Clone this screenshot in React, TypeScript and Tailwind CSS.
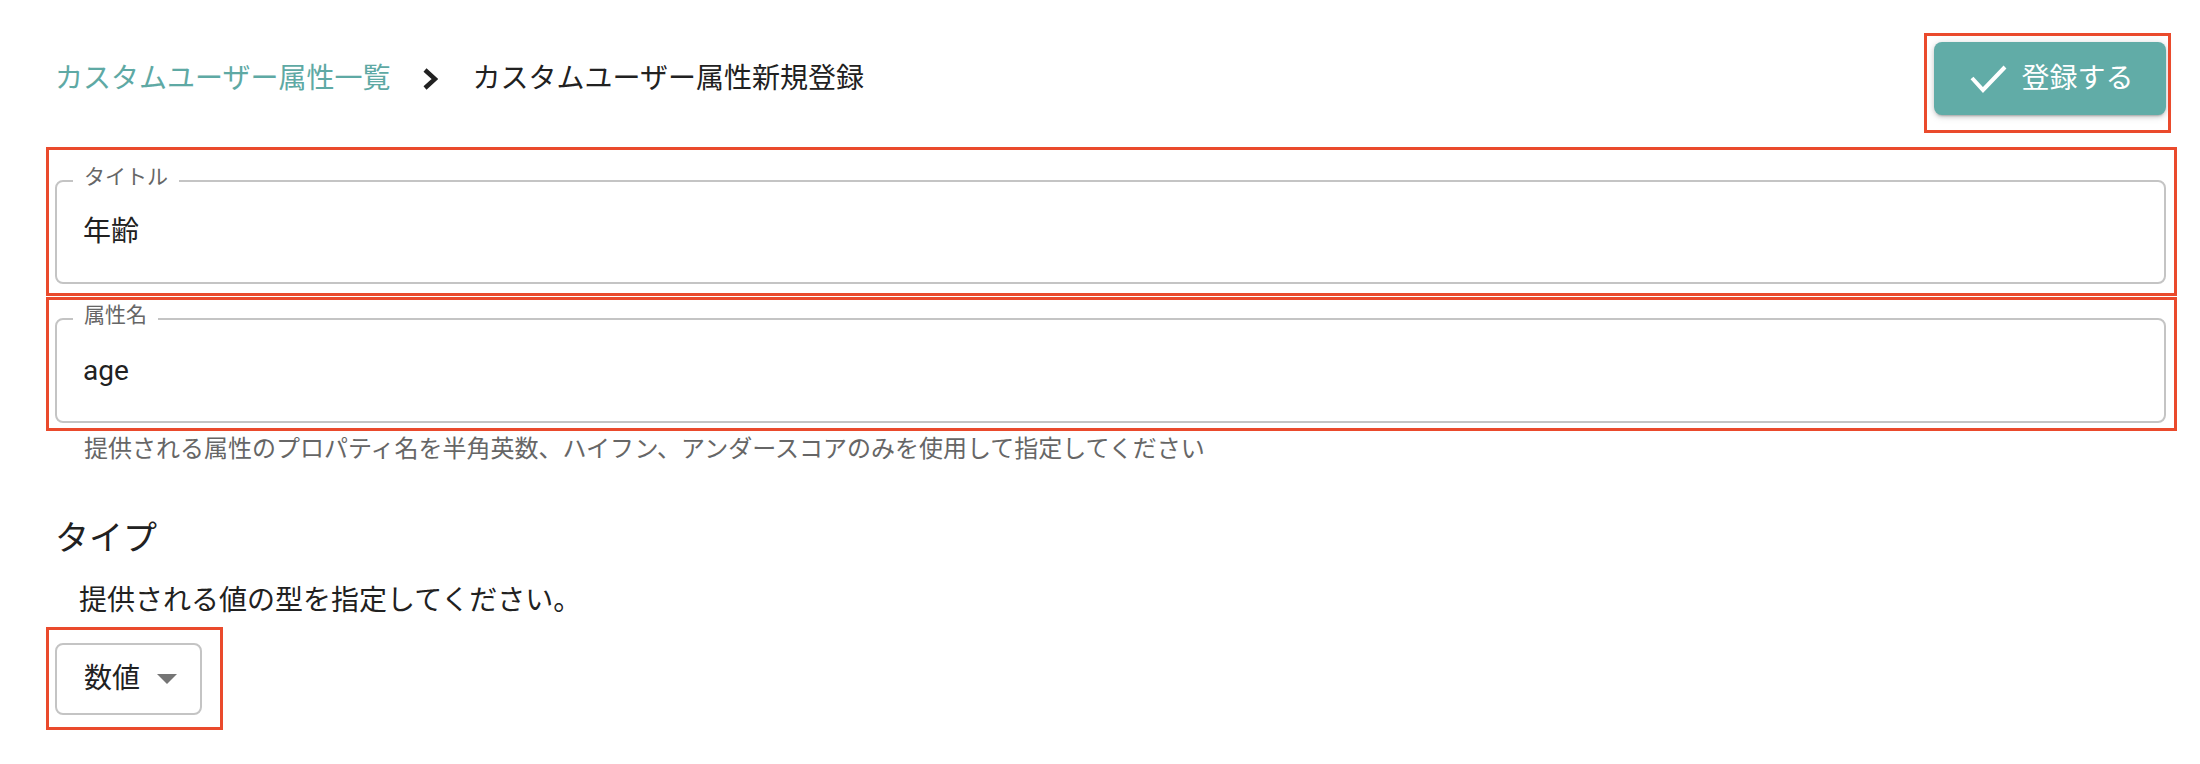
function Mark({ className }: { className: string }) {
  // red annotation frame drawn over the screenshot
  return <div className={`pointer-events-none absolute border-[3px] border-[#ea4a2c] ${className}`} />;
}

function OutlinedField({ label, value, height }: { label: string; value: string; height: string }) {
  return (
    <div className={`relative flex items-center rounded-lg border-2 border-[#c4c4c4] pl-[26px] ${height}`}>
      <span className="absolute left-[16px] top-[-17px] bg-white px-[11px] text-[21px] leading-[24px] text-[#666666]">
        {label}
      </span>
      <span className="text-[28px] leading-[40px] text-[#212121]">{value}</span>
    </div>
  );
}

export default function App() {
  return (
    <div className="min-h-screen bg-white pl-[55px] pr-[34px] pt-[42px] font-[Roboto,'Noto_Sans_CJK_JP',sans-serif]">
      {/* Header */}
      <div className="flex h-[73px] items-center justify-between">
        <div className="flex items-center text-[28px] leading-[40px]">
          <span className="text-[#5ea9a4]">カスタムユーザー属性一覧</span>
          <svg width="16" height="22" viewBox="0 0 16 22" className="ml-[32px] mr-[34px]">
            <polyline points="3,2 13,11 3,20" fill="none" stroke="#212121" strokeWidth="4.5" />
          </svg>
          <span className="text-[#212121]">カスタムユーザー属性新規登録</span>
        </div>
        <div className="relative">
          <button className="flex h-[73px] w-[232px] items-center justify-center gap-[14px] rounded-lg bg-[#61aca7] pl-[4px] text-white shadow-[0_3px_2px_-2px_rgba(0,0,0,0.2),0_2px_4px_0_rgba(0,0,0,0.14),0_1px_10px_0_rgba(0,0,0,0.12)]">
            <svg width="37" height="28" viewBox="0 0 37 28">
              <polyline points="2,13 13,25 35,2" fill="none" stroke="white" strokeWidth="4" />
            </svg>
            <span className="text-[28px] leading-[40px]">登録する</span>
          </button>
          <Mark className="-left-[10px] -top-[9px] -right-[5px] -bottom-[18px]" />
        </div>
      </div>

      {/* Title field */}
      <div className="relative mt-[65px]">
        <OutlinedField label="タイトル" value="年齢" height="h-[104px]" />
        <Mark className="-left-[9px] -top-[33px] -right-[11px] -bottom-[12px]" />
      </div>

      {/* Attribute name field */}
      <div className="relative mt-[34px]">
        <OutlinedField label="属性名" value="age" height="h-[105px]" />
        <Mark className="-left-[9px] -top-[21px] -right-[11px] -bottom-[8px]" />
      </div>
      <p className="mt-[8px] pl-[29px] text-[24px] leading-[36px] text-[#666666]">
        提供される属性のプロパティ名を半角英数、ハイフン、アンダースコアのみを使用して指定してください
      </p>

      {/* Type */}
      <h2 className="mt-[47px] text-[34px] leading-[48px] text-[#212121]">タイプ</h2>
      <p className="mt-[19px] pl-[24px] text-[28px] leading-[40px] text-[#212121]">
        提供される値の型を指定してください。
      </p>
      <div className="relative mt-[22px] w-fit">
        <div className="flex h-[72px] w-[147px] items-center rounded-lg border-2 border-[#c4c4c4] pl-[27px]">
          <span className="text-[28px] leading-[40px] text-[#212121]">数値</span>
          <svg width="20" height="10" viewBox="0 0 20 10" className="ml-[17px]">
            <polygon points="0,0 20,0 10,10" fill="#757575" />
          </svg>
        </div>
        <Mark className="-left-[9px] -top-[16px] -right-[21px] -bottom-[15px]" />
      </div>
    </div>
  );
}
